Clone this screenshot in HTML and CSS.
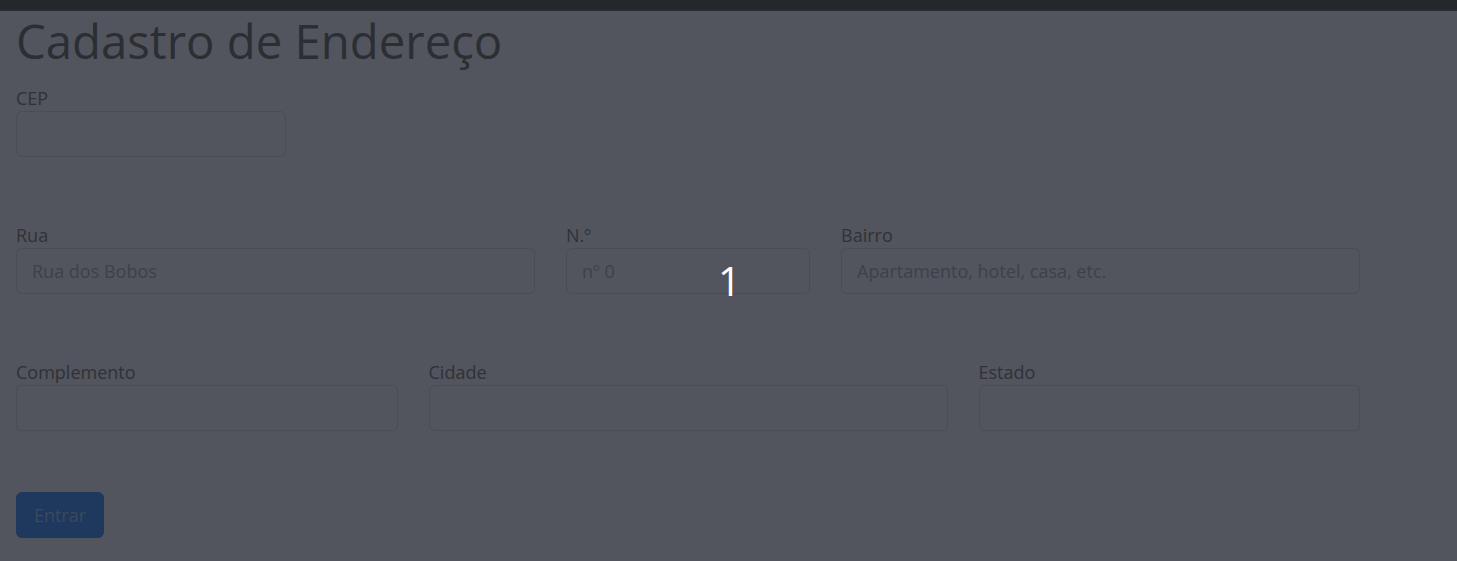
FILE: index.html
```html
<!DOCTYPE html>
<html lang="pt-BR">
<head>
<meta charset="utf-8">
<title>Cadastro de Endereço</title>
<link rel="stylesheet" href="styles.css">
</head>
<body>
<div class="topbar"></div>
<main class="page">
  <h1 class="title">Cadastro de Endereço</h1>
  <form class="form">
    <div class="row row-cep">
      <div class="field field-cep">
        <label class="label">CEP</label>
        <input class="input" type="text">
      </div>
    </div>
    <div class="row">
      <div class="field w4">
        <label class="label">Rua</label>
        <input class="input" type="text" placeholder="Rua dos Bobos">
      </div>
      <div class="field w2">
        <label class="label">N.º</label>
        <input class="input" type="text" placeholder="nº 0">
      </div>
      <div class="field w4">
        <label class="label">Bairro</label>
        <input class="input" type="text" placeholder="Apartamento, hotel, casa, etc.">
      </div>
    </div>
    <div class="row row-last">
      <div class="field w3">
        <label class="label">Complemento</label>
        <input class="input" type="text">
      </div>
      <div class="field w4">
        <label class="label">Cidade</label>
        <input class="input" type="text">
      </div>
      <div class="field w3">
        <label class="label">Estado</label>
        <input class="input" type="text">
      </div>
    </div>
    <div class="actions">
      <button class="btn" type="button">Entrar</button>
    </div>
  </form>
</main>
<div class="step-badge">1</div>
</body>
</html>
```
FILE: styles.css
```css
html, body {
  margin: 0;
  padding: 0;
  background: #52555d;
  height: 100%;
  overflow: hidden;
}
body {
  font-family: "Open Sans", "Noto Sans", sans-serif;
  color: #303338;
  position: relative;
}
.topbar {
  height: 10px;
  background: #24282c;
  border-bottom: 1px solid #2c3035;
}
.title {
  margin: 0 0 0 16px;
  font-size: 47.3px;
  font-weight: 400;
  line-height: 60px;
  color: #2b2e33;
  height: 75px;
}
.form {
  width: 1375px;
}
.row {
  display: flex;
  margin-bottom: 66px;
}
.row-last {
  margin-bottom: 45px;
}
.row-cep .field-cep {
  width: 301px;
}
.field {
  box-sizing: border-box;
  padding: 0 15px 0 16px;
  display: flex;
  flex-direction: column;
}
.w2 { width: 20%; }
.w3 { width: 30%; }
.w4 { width: 40%; }
.label {
  font-size: 18px;
  line-height: 24px;
  margin-bottom: 1px;
  color: #2f3237;
}
.input {
  box-sizing: border-box;
  height: 46px;
  width: 100%;
  background: #52555d;
  border: 1px solid #4a4d54;
  border-radius: 6px;
  padding: 0 15px;
  font-family: inherit;
  font-size: 18px;
  color: #303338;
  outline: none;
}
.input::placeholder {
  color: #3e4148;
}
.actions {
  padding: 16px 0 0 16px;
}
.btn {
  box-sizing: border-box;
  height: 46px;
  width: 88px;
  background: #1f385e;
  border: 1px solid #1f385e;
  border-radius: 6px;
  color: #3d495d;
  font-family: inherit;
  font-size: 18px;
  padding: 0;
}
.step-badge {
  position: absolute;
  left: 718px;
  top: 256px;
  font-family: "Open Sans", sans-serif;
  font-size: 40px;
  line-height: 50px;
  color: #ffffff;
}
```
